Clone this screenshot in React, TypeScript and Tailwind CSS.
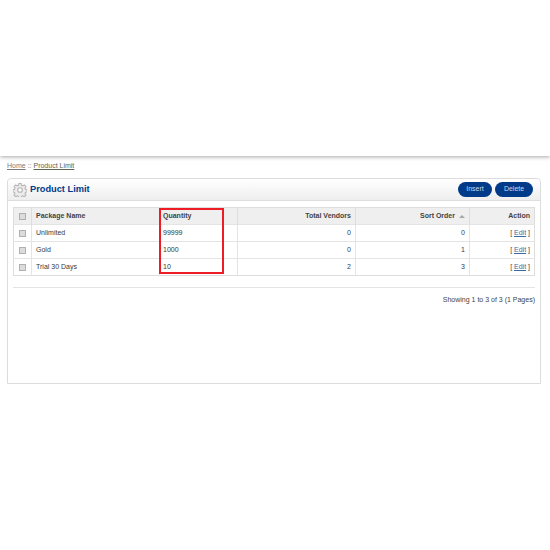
import React from "react";

const rows = [
  { name: "Unlimited", qty: "99999", vendors: "0", sort: "0" },
  { name: "Gold", qty: "1000", vendors: "0", sort: "1" },
  { name: "Trial 30 Days", qty: "10", vendors: "2", sort: "3" },
];

const Check = () => (
  <span className="block w-[5px] h-[5px] mx-auto border border-[#b0b0b0] bg-[#dcdcdc] box-content" />
);

const Gear = () => (
  <svg width="14" height="14" viewBox="0 0 24 24" fill="#ececec" stroke="#b4b4b4" strokeWidth="1.8">
    <path d="M10 1h4l.6 3 2.2.9 2.6-1.7 2.8 2.8-1.7 2.6.9 2.2 2.6.6v4l-2.6.6-.9 2.2 1.7 2.6-2.8 2.8-2.6-1.7-2.2.9-.6 3h-4l-.6-3-2.2-.9-2.6 1.7-2.8-2.8 1.7-2.6-.9-2.2-2.6-.6v-4l2.6-.6.9-2.2-1.7-2.6 2.8-2.8 2.6 1.7 2.2-.9z" />
    <circle cx="12" cy="12" r="4" fill="#fff" />
  </svg>
);

const Pill = ({ w, children }: { w: string; children: React.ReactNode }) => (
  <span className={`flex items-center justify-center h-[15px] rounded-full bg-[#003a88] text-[#c9d6e8] text-[7px] ${w}`}>
    {children}
  </span>
);

export default function App() {
  return (
    <div className="w-[550px] h-[550px] bg-white overflow-hidden font-['Liberation_Sans',Arial,sans-serif] text-[7px] text-[#333]">
      <div className="h-[156px] bg-white shadow-[0_1px_4px_rgba(0,0,0,0.35)]" />

      <div className="pl-[7px] pt-[5px] h-[22px] text-[7px] leading-[9px] text-[#7a7a7a]">
        <span className="underline">Home</span> :: <span className="underline text-[#5c6650]">Product Limit</span>
      </div>

      <div className="ml-[7px] w-[534px] h-[206px] border border-[#dcdcdc] rounded-t-[4px] bg-white">
        <div className="h-[22px] flex items-center justify-between pl-[5px] pr-[7px] bg-gradient-to-b from-white to-[#eeeeee] border-b border-[#dedede] rounded-t-[4px]">
          <div className="flex items-center gap-[3px]">
            <Gear />
            <span className="text-[#003a88] font-bold text-[9.25px] pt-[1px]">Product Limit</span>
          </div>
          <div className="flex gap-[3px]">
            <Pill w="w-[34px]">Insert</Pill>
            <Pill w="w-[38px]">Delete</Pill>
          </div>
        </div>

        <div className="px-[5px] pt-[6px]">
          <div className="relative">
            <table className="w-[521px] table-fixed border-collapse border border-[#dddddd]">
              <colgroup>
                <col className="w-[18px]" />
                <col className="w-[128px]" />
                <col className="w-[78px]" />
                <col className="w-[118px]" />
                <col className="w-[114px]" />
                <col className="w-[65px]" />
              </colgroup>
              <thead>
                <tr className="h-[17px] bg-[#efefef] font-bold text-[#444]">
                  <th className="border-r border-[#dddddd]"><Check /></th>
                  <th className="text-left pl-[4px] font-bold text-[#444] border-r border-[#dddddd]">Package Name</th>
                  <th className="text-left pl-[3px] font-bold text-[#444] border-r border-[#dddddd]">Quantity</th>
                  <th className="text-right pr-[4px] font-bold border-r border-[#dddddd]">Total Vendors</th>
                  <th className="text-right pr-[4px] font-bold border-r border-[#dddddd]">
                    <span className="inline-flex items-center gap-[4px]">
                      Sort Order
                      <span className="w-0 h-0 border-x-[3px] border-x-transparent border-b-[3px] border-b-[#a8a8a8]" />
                    </span>
                  </th>
                  <th className="text-right pr-[4px] font-bold">Action</th>
                </tr>
              </thead>
              <tbody>
                {rows.map((r) => (
                  <tr key={r.name} className="h-[17px] border-t border-[#e4e4e4]">
                    <td className="border-r border-[#e4e4e4]"><Check /></td>
                    <td className="pl-[4px] text-[#3a3a3a] border-r border-[#e4e4e4]">{r.name}</td>
                    <td className="pl-[3px] text-[#2a3a30] border-r border-[#e4e4e4]">{r.qty}</td>
                    <td className="text-right pr-[4px] text-[#2a3c5c] border-r border-[#e4e4e4]">{r.vendors}</td>
                    <td className="text-right pr-[4px] text-[#2a3c5c] border-r border-[#e4e4e4]">{r.sort}</td>
                    <td className="text-right pr-[4px] text-[#444]">
                      [ <span className="underline text-[#3c6a9e]">Edit</span> ]
                    </td>
                  </tr>
                ))}
              </tbody>
            </table>
            <div className="absolute left-[146px] top-[1px] w-[65px] h-[66px] border-2 border-[#ee1c25]" />
          </div>

          <div className="mt-[11px] border-t border-[#e4e4e4] w-[522px] pt-[7px] text-right text-[#444] text-[7px] leading-[10px]">
            Showing 1 to 3 of 3 (1 Pages)
          </div>
        </div>
      </div>
    </div>
  );
}
